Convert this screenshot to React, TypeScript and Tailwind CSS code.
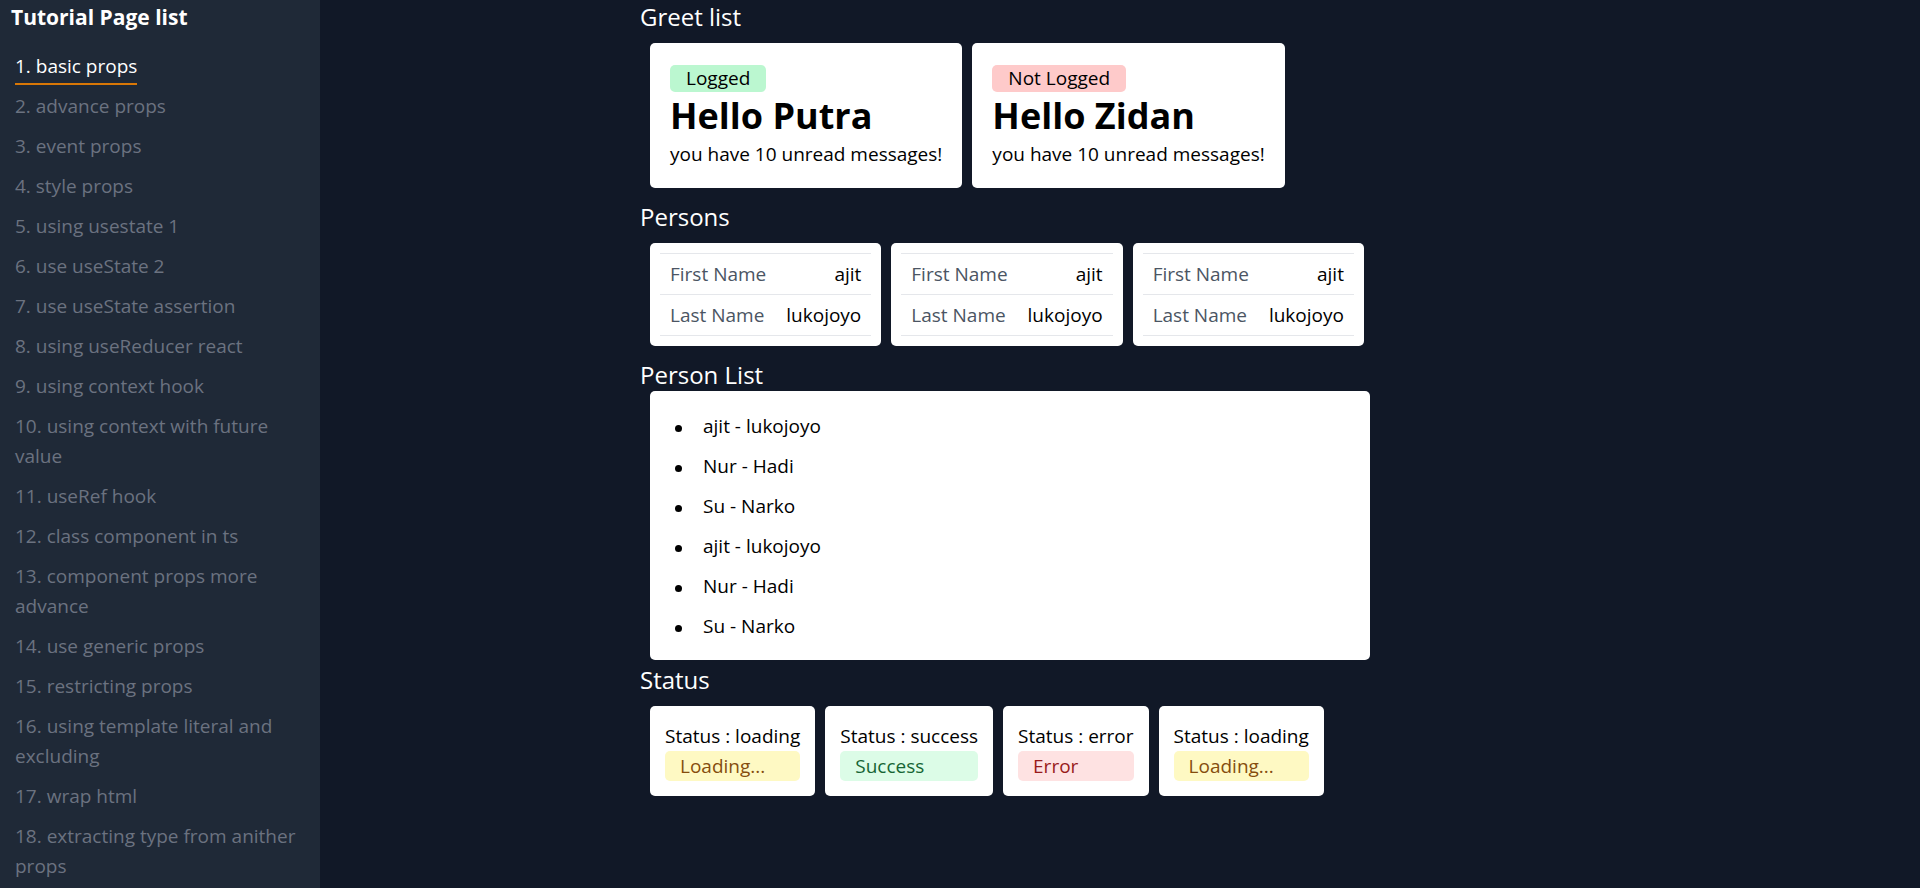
import React from "react";

const pages = [
  "1. basic props",
  "2. advance props",
  "3. event props",
  "4. style props",
  "5. using usestate 1",
  "6. use useState 2",
  "7. use useState assertion",
  "8. using useReducer react",
  "9. using context hook",
  "10. using context with future value",
  "11. useRef hook",
  "12. class component in ts",
  "13. component props more advance",
  "14. use generic props",
  "15. restricting props",
  "16. using template literal and excluding",
  "17. wrap html",
  "18. extracting type from anither props",
];

const greets = [
  { name: "Putra", logged: true, messages: 10 },
  { name: "Zidan", logged: false, messages: 10 },
];

const persons = [
  { first: "ajit", last: "lukojoyo" },
  { first: "ajit", last: "lukojoyo" },
  { first: "ajit", last: "lukojoyo" },
];

const personList = [
  { first: "ajit", last: "lukojoyo" },
  { first: "Nur", last: "Hadi" },
  { first: "Su", last: "Narko" },
  { first: "ajit", last: "lukojoyo" },
  { first: "Nur", last: "Hadi" },
  { first: "Su", last: "Narko" },
];

type Status = "loading" | "success" | "error";
const statuses: Status[] = ["loading", "success", "error", "loading"];

function StatusBadge({ status }: { status: Status }) {
  if (status === "loading")
    return (
      <div className="h-[30px] leading-[30px] rounded-[5px] px-[15px] bg-[#fef9c3] text-[#854d0e]">
        Loading...
      </div>
    );
  if (status === "success")
    return (
      <div className="h-[30px] leading-[30px] rounded-[5px] px-[15px] bg-[#dcfce7] text-[#166534]">
        Success
      </div>
    );
  return (
    <div className="h-[30px] leading-[30px] rounded-[5px] px-[15px] bg-[#fee2e2] text-[#991b1b]">
      Error
    </div>
  );
}

export default function App() {
  return (
    <div className="flex min-h-screen bg-[#111827] font-['Open_Sans',sans-serif] text-[19px]">
      {/* sidebar */}
      <aside className="w-[320px] shrink-0 h-screen overflow-hidden bg-[#1f2937] px-[10px]">
        <h2 className="pl-px text-[21px] leading-[35px] font-bold text-white">
          Tutorial Page list
        </h2>
        <ul className="mt-[16px] flex flex-col gap-[10px]">
          {pages.map((p, i) => (
            <li key={p} className="pl-[5px] leading-[30px]">
              {i === 0 ? (
                <a className="text-white border-b-2 border-[#d97706] pb-[4px]">{p}</a>
              ) : (
                <a className="text-[#6b7280]">{p}</a>
              )}
            </li>
          ))}
        </ul>
      </aside>

      {/* content */}
      <main className="flex-1">
        <div className="max-w-[960px] mx-auto">
          {/* Greet list */}
          <h2 className="-mt-px text-[24px] leading-[35px] text-white">Greet list</h2>
          <div className="mt-[9px] ml-[10px] flex gap-[10px]">
            {greets.map((g) => (
              <div key={g.name} className="bg-white rounded-[5px] pt-5 px-5 pb-[19px] flex flex-col">
                <div className="h-[30px] flex items-center">
                  <span
                    className={
                      g.logged
                        ? "h-[27px] leading-[27px] px-4 rounded-[5px] bg-[#bbf7d0] text-black"
                        : "h-[27px] leading-[27px] px-4 rounded-[5px] bg-[#fecaca] text-black"
                    }
                  >
                    {g.logged ? "Logged" : "Not Logged"}
                  </span>
                </div>
                <h1 className="text-[36px] leading-[46px] font-bold text-black">Hello {g.name}</h1>
                <p className="leading-[30px] text-black">you have {g.messages} unread messages!</p>
              </div>
            ))}
          </div>

          {/* Persons */}
          <h2 className="mt-[11px] text-[24px] leading-[35px] text-white">Persons</h2>
          <div className="mt-[9px] ml-[10px] flex gap-[10px]">
            {persons.map((p, i) => (
              <div key={i} className="bg-white rounded-[5px] p-[10px]">
                <table className="border-collapse">
                  <tbody>
                    <tr className="border-y border-[#e5e7eb]">
                      <td className="px-[10px] py-[5px] leading-[30px] text-[#4b5563]">First Name</td>
                      <td className="px-[10px] py-[5px] leading-[30px] text-right text-black">{p.first}</td>
                    </tr>
                    <tr className="border-b border-[#e5e7eb]">
                      <td className="px-[10px] py-[5px] leading-[30px] text-[#4b5563]">Last Name</td>
                      <td className="px-[10px] py-[5px] leading-[30px] text-right text-black">{p.last}</td>
                    </tr>
                  </tbody>
                </table>
              </div>
            ))}
          </div>

          {/* Person List */}
          <h2 className="mt-[11px] text-[24px] leading-[35px] text-white">Person List</h2>
          <div className="-mt-px ml-[10px] w-[720px] bg-white rounded-[5px] pt-5 px-5 pb-[19px]">
            <ul className="pl-[5px] flex flex-col gap-[10px]">
              {personList.map((p, i) => (
                <li key={i} className="flex leading-[30px] text-black">
                  <span className="mt-[14px] mr-[21px] w-[7px] h-[7px] shrink-0 rounded-full bg-black" />
                  <span>
                    {p.first} - {p.last}
                  </span>
                </li>
              ))}
            </ul>
          </div>

          {/* Status */}
          <h2 className="mt-[2px] text-[24px] leading-[35px] text-white">Status</h2>
          <div className="mt-[9px] ml-[10px] flex gap-[10px]">
            {statuses.map((s, i) => (
              <div key={i} className="bg-white rounded-[5px] p-[15px]">
                <div className="leading-[30px] text-black">Status : {s}</div>
                <StatusBadge status={s} />
              </div>
            ))}
          </div>
        </div>
      </main>
    </div>
  );
}
